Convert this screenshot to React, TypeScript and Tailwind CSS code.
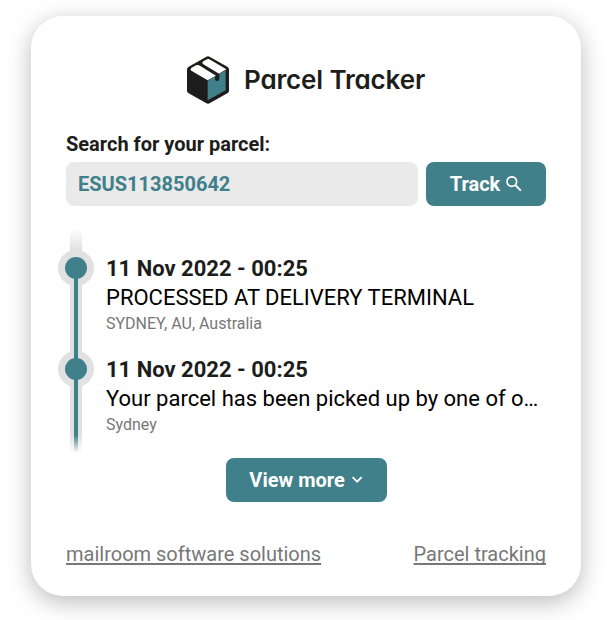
import React from "react";

type ParcelEvent = { date: string; status: string; place: string };

const events: ParcelEvent[] = [
  {
    date: "11 Nov 2022 - 00:25",
    status: "PROCESSED AT DELIVERY TERMINAL",
    place: "SYDNEY, AU, Australia",
  },
  {
    date: "11 Nov 2022 - 00:25",
    status: "Your parcel has been picked up by one of o…",
    place: "Sydney",
  },
];

function BoxLogo() {
  return (
    <svg width="42" height="48" viewBox="0 0 126 144" aria-hidden="true">
      <path
        d="M57 3Q63 -1 69 3L121 32Q126 35 126 40V104Q126 109 121 112L69 141Q63 145 57 141L5 112Q0 109 0 104V40Q0 35 5 32Z"
        fill="#1d1d1b"
      />
      <path d="M13 36Q8 41 13 44L62 73L87 59L40 30Q33 26 27 28Z" fill="#fff" />
      <path d="M49 16Q43 20 49 25L96 53L118 40L71 12Q65 8 60 10Z" fill="#fff" />
      <path d="M62 74L84 61V69Q84 75 90 75Q97 75 97 69V54L116 43V103L62 133Z" fill="#40808a" />
    </svg>
  );
}

function TimelineItem({ event, first }: { event: ParcelEvent; first: boolean }) {
  return (
    <li className="relative flex h-[101px] flex-col pl-10">
      <span className="absolute -left-2 top-[22px] flex size-9 items-center justify-center rounded-full bg-[#e1e1e1]">
        <span className="size-[22px] rounded-full bg-[#40808a]" />
      </span>
      {!first && <span className="absolute left-2 top-0 h-[30px] w-1 bg-[#40808a]" />}
      <span className="absolute left-2 top-10 h-[61px] w-1 bg-[#40808a]" />
      <p className="mt-[26px] shrink-0 text-[22px] leading-[29px] font-bold whitespace-nowrap text-[#1d1d1b]">{event.date}</p>
      <p className="shrink-0 text-[22px] leading-[29px] whitespace-nowrap text-black">{event.status}</p>
      <p className="shrink-0 text-[16px] leading-[24px] whitespace-nowrap text-[#777]">{event.place}</p>
    </li>
  );
}

export default function App() {
  return (
    <main className="flex h-[620px] w-[608px] items-start overflow-hidden bg-white pt-4 pl-[31px] font-['Roboto',sans-serif]">
      <section className="flex h-[580px] w-[550px] flex-col rounded-[32px] bg-white px-[35px] pt-10 shadow-[0_6px_24px_rgba(0,0,0,0.27)]">
        <header className="flex h-12 items-center justify-center gap-[15px]">
          <BoxLogo />
          <h1 className="w-[181px] text-[26px] leading-8 font-semibold tracking-[-0.15px] whitespace-nowrap text-[#1d1d1b] font-['Inter',sans-serif] [font-feature-settings:'cv11']">
            Parcel Tracker
          </h1>
        </header>

        <label htmlFor="parcel" className="mt-6 h-[34px] text-[20px] leading-8 font-bold whitespace-nowrap text-[#1d1d1b]">
          Search for your parcel:
        </label>
        <div className="flex h-11 gap-2">
          <input
            id="parcel"
            defaultValue="ESUS113850642"
            className="h-11 w-[352px] rounded-lg bg-[#eaeaea] px-3 text-[20px] font-bold text-[#40808a] outline-none"
          />
          <button className="flex h-11 w-[120px] items-center justify-center gap-[6px] rounded-lg bg-[#40808a] text-[20px] font-bold text-white">
            Track
            <svg width="16" height="16" viewBox="0 0 16 16" fill="none" stroke="currentColor" strokeWidth="1.7">
              <circle cx="5.8" cy="5.6" r="4.8" />
              <path d="M9.2 9L14.8 14.6" strokeWidth="1.9" />
            </svg>
          </button>
        </div>

        <div className="relative mt-[22px] h-[226px]">
          <span className="absolute top-0 left-1 h-[226px] w-3 bg-[linear-gradient(to_bottom,#fff_0,#e1e1e1_22px,#e1e1e1_100%)]" />
          <ul className="relative">
            {events.map((event, i) => (
              <TimelineItem key={i} event={event} first={i === 0} />
            ))}
          </ul>
          <span className="absolute top-[202px] left-2 h-6 w-1 bg-[#40808a]" />
          <span className="absolute top-[207px] left-1 h-5 w-3 bg-gradient-to-b from-white/0 to-white to-90%" />
        </div>

        <button className="mt-1 flex h-11 w-[161px] shrink-0 items-center justify-center gap-[7px] self-center rounded-lg bg-[#40808a] text-[20px] font-bold text-white">
          View more
          <svg width="11" height="8" viewBox="0 0 11 8" fill="none" stroke="currentColor" strokeWidth="1.8">
            <path d="M0.6 1.2L5.1 5.7L9.6 1.2" />
          </svg>
        </button>

        <footer className="mt-[37px] flex justify-between text-[20px] leading-[30px] whitespace-nowrap text-[#777]">
          <a className="underline decoration-2 underline-offset-2 [text-decoration-skip-ink:none]">mailroom software solutions</a>
          <a className="underline decoration-2 underline-offset-2 [text-decoration-skip-ink:none]">Parcel tracking</a>
        </footer>
      </section>
    </main>
  );
}
